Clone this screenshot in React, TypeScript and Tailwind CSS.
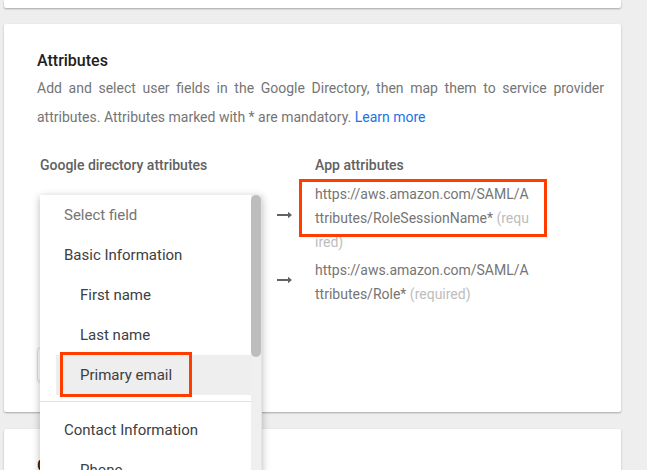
import React from 'react'

function Arrow({ className }: { className?: string }) {
  return (
    <svg width="15" height="8" viewBox="0 0 15 8" className={className}>
      <path d="M0 4h12" stroke="#5f6368" strokeWidth="2" />
      <path d="M11 0.8L15 4l-4 3.2z" fill="#5f6368" />
    </svg>
  )
}

function FieldMenu() {
  return (
    <div className="absolute left-[36px] top-[171px] z-10 flex h-[300px] w-[222px] bg-white shadow-[0_2px_8px_rgba(0,0,0,0.28)]">
      <div className="flex-1 text-[15px] text-[#3c4043]">
        <div className="flex h-[40px] items-center pl-[24px] text-[#757575]">Select field</div>
        <div className="flex h-[40px] items-center pl-[24px]">Basic Information</div>
        <div className="flex h-[40px] items-center pl-[40px]">First name</div>
        <div className="flex h-[40px] items-center pl-[40px]">Last name</div>
        <div className="ml-[16px] flex h-[40px] items-center bg-[#eeeeee] pl-[24px]">Primary email</div>
        <div className="mt-[6px] mb-[8px] h-px bg-[#e0e0e0]" />
        <div className="flex h-[40px] items-center pl-[24px]">Contact Information</div>
        <div className="flex h-[40px] items-center pl-[40px]">Phone</div>
      </div>
      <div className="w-[11px] border-r border-[#e3e3e3] bg-[#efefef]">
        <div className="h-[162px] w-[10px] rounded-full bg-[#bdbdbd]" />
      </div>
    </div>
  )
}

export default function App() {
  return (
    <div className="h-[470px] w-[647px] overflow-hidden bg-[#eeeeee] font-['Roboto',_sans-serif]">
      <div className="flex w-[621px] flex-col pl-[4px]">
        <div className="h-[8px] rounded-b-[2px] bg-white shadow-[0_1px_2px_rgba(0,0,0,0.3)]" />

        <div className="relative z-10 mt-[16px] h-[388px] rounded-[2px] bg-white pl-[33px] pt-[25px] shadow-[0_1px_2px_rgba(0,0,0,0.3)]">
          <h2 className="text-[16px] leading-[24px] font-medium text-[#212121]">Attributes</h2>
          <p className="mt-[1px] w-[567px] text-justify text-[14px] leading-[29px] text-[#757575]">
            Add and select user fields in the Google Directory, then map them to service provider
            attributes. Attributes marked with * are mandatory.{' '}
            <span className="text-[#1a73e8]">Learn more</span>
          </p>

          <div className="mt-[23px] flex text-[14px] leading-[20px] font-medium text-[#616161]">
            <div className="w-[240px] pl-[3px]">Google directory attributes</div>
            <div className="pl-[38px]">App attributes</div>
          </div>

          <div className="mt-[7px] flex">
            <div className="w-[240px]" />
            <Arrow className="mt-[29px]" />
            <div className="ml-[23px] whitespace-nowrap text-[14px] leading-[24px] text-[#757575]">
              <div>https://aws.amazon.com/SAML/A</div>
              <div>
                ttributes/RoleSessionName* <span className="text-[#bdbdbd]">(requ</span>
              </div>
              <div className="text-[#bdbdbd]">ired)</div>
            </div>
          </div>

          <div className="mt-[4px] flex">
            <div className="w-[240px]" />
            <Arrow className="mt-[18px]" />
            <div className="ml-[23px] whitespace-nowrap text-[14px] leading-[24px] text-[#757575]">
              <div>https://aws.amazon.com/SAML/A</div>
              <div>
                ttributes/Role* <span className="text-[#bdbdbd]">(required)</span>
              </div>
            </div>
          </div>

          <div className="mt-[41px] h-[35px] w-[220px] rounded-[4px] border border-[#dadce0] shadow-[0_1px_2px_rgba(0,0,0,0.12)]" />

          <FieldMenu />

          <div className="absolute left-[56px] top-[328px] z-20 h-[45px] w-[132px] border-[3px] border-[#ff3d00]" />
          <div className="absolute left-[295px] top-[155px] z-20 h-[58px] w-[248px] border-[3px] border-[#ff3d00]" />
        </div>

        <div className="mt-[17px] h-[120px] rounded-[2px] bg-white pl-[33px] pt-[25px] shadow-[0_1px_2px_rgba(0,0,0,0.3)]">
          <h2 className="text-[16px] leading-[24px] font-medium text-[#212121]">Group membership (optional)</h2>
        </div>
      </div>
    </div>
  )
}
